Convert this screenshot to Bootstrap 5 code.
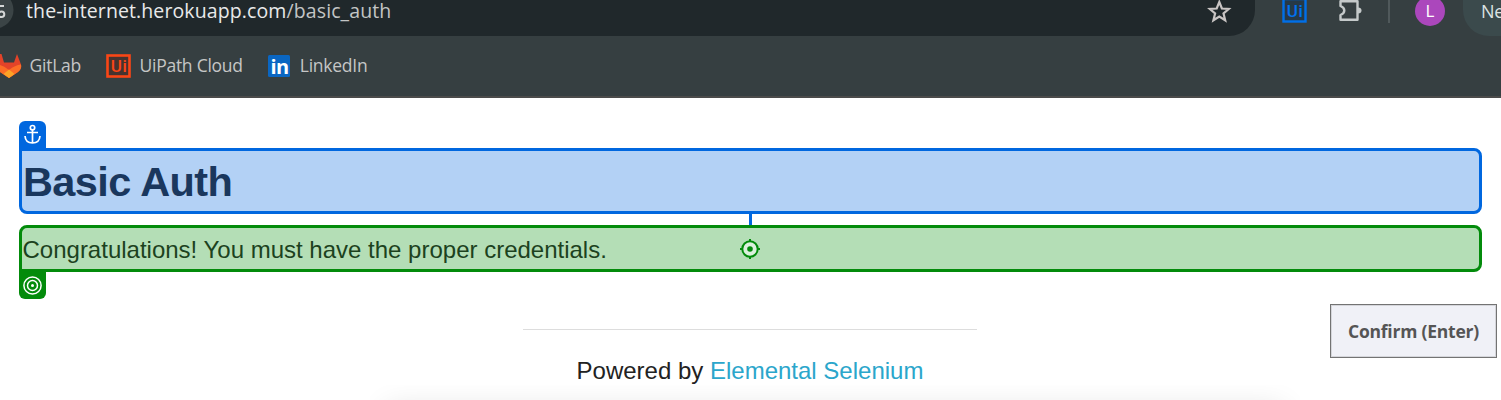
<!DOCTYPE html>
<html lang="en">
<head>
<meta charset="utf-8">
<meta name="viewport" content="width=device-width, initial-scale=1">
<title>The Internet</title>
<link href="https://cdn.jsdelivr.net/npm/bootstrap@5.3.0/dist/css/bootstrap.min.css" rel="stylesheet">
<style>
  body { font-family: "Liberation Sans", sans-serif; background: #fff; }
  svg { display: block; flex: none; }
  .viewport { height: 400px; }
  .chrome-bar { height: 98px; background: #363f41; border-bottom: 2px solid #4b4b4a; font-family: "Open Sans", "Noto Sans", sans-serif; }
  .tool-row { height: 36px; }
  .tool-row > * { flex: none; }
  .omnibox { width: 1255px; height: 36px; background: #20282b; border-bottom-right-radius: 26px; }
  .site-chip { width: 14px; height: 36px; }
  .url { font-size: 19.5px; line-height: 24px; color: #e9eaea; margin: -1px 0 0 12px; letter-spacing: .11px; white-space: nowrap; }
  .url-path { color: #c3c5c5; }
  .star { margin: -1px 23px 0 auto; }
  .ext { margin-left: 27px; }
  .puzzle { margin-left: 31px; }
  .bar-sep { width: 2px; height: 23px; background: #50595b; margin-left: 25px; }
  .avatar { width: 30px; height: 30px; margin: -4px 0 0 25px; background: #ab47bc; color: #fff; font-size: 17px; }
  .update { width: 38px; height: 36px; margin-left: 18px; background: #3b4a4c; border-bottom-left-radius: 26px; color: #dce3e3; font-size: 18px; line-height: 22px; padding-left: 18px; letter-spacing: -.3px; }
  .bookmarks { height: 58px; font-size: 17.5px; color: #c5c6c6; white-space: nowrap; }
  .bookmarks span { line-height: 24px; letter-spacing: -.25px; }
  .bookmarks svg { position: relative; top: 1px; }
  .logo-text { font-family: Roboto, sans-serif; font-weight: 500; font-size: 17px; letter-spacing: .6px; }
  .page-area { padding: 50px 19px 0; }
  .mark-box { border: 3px solid; border-radius: 8px; }
  .anchor-box { height: 66px; border-color: #0067df; background: #b3d1f5; border-top-left-radius: 0; }
  .target-box { height: 47px; margin-top: 11px; border-color: #038b0b; background: #b4deb6; border-bottom-left-radius: 0; }
  .anchor-box h1 { font-size: 41.5px; line-height: 60px; font-weight: 700; color: #1a375d; margin: 1px 0 0 1px; letter-spacing: -.6px; }
  .target-box p { font-size: 24px; line-height: 41px; color: #1c421e; margin: 1px 0 0 .5px; }
  .tab { left: -3px; width: 27px; padding-left: 4px; }
  .tab-top { top: -30px; height: 27px; background: #0067df; border-radius: 6px 6px 0 0; padding-top: 3px; }
  .tab-bottom { top: 44px; height: 27px; background: #038b0b; border-radius: 0 0 6px 6px; padding-top: 4px; }
  .link-line { left: 727px; top: 60px; width: 3px; height: 14px; background: #0067df; }
  .aim { left: 717px; top: 10px; }
  .foot { width: 454px; margin: 57px 0 0 504px; border-top: 1px solid #ddd; padding-top: 23px; font-size: 24px; line-height: 36px; color: #222; white-space: nowrap; }
  .foot a { color: #2ba6cb; text-decoration: none; }
  .confirm { right: 4px; top: 304px; width: 167px; height: 54px; background: #f0f1f7; border: 1px solid #737373; box-shadow: inset 0 0 0 1px #d5d6db; border-radius: 0; color: #555; font: 700 17.5px/24px "Open Sans", "Noto Sans", sans-serif; letter-spacing: -.22px; padding: 0; white-space: nowrap; }
  .panel-shadow { left: 370px; top: 385px; width: 930px; height: 15px; overflow: hidden; }
  .panel-shadow::before { content: ""; display: block; margin: 25px 18px 0; height: 60px; box-shadow: 0 0 30px 2px rgba(0,0,0,.12); }
</style>
</head>
<body>
<div class="viewport position-relative overflow-hidden">
<header class="chrome-bar">
  <div class="tool-row d-flex align-items-start">
    <div class="omnibox d-flex align-items-start">
      <svg class="site-chip" viewBox="0 0 14 36"><circle cx="-5" cy="10" r="18.5" fill="#3b4446"/><g fill="none" stroke="#d5d7d7" stroke-width="2"><path d="M-5 6H4"/><path d="M-4 14H0"/><circle cx="1.5" cy="14.3" r="2.8"/></g></svg>
      <div class="url">the-internet.herokuapp.com<span class="url-path">/basic_auth</span></div>
      <svg class="star" width="26" height="26" viewBox="0 0 26 26"><path d="M13.3 3l2.6 6.5 6.9.5-5.3 4.5 1.7 6.8-5.9-3.7-5.9 3.7 1.7-6.8L3.8 10l6.9-.5z" fill="none" stroke="#c9c5c4" stroke-width="2.2"/></svg>
    </div>
    <svg class="ext" width="25" height="23" viewBox="0 0 25 23"><rect x="1.500" y="-1" width="22" height="22.500" fill="#263947" stroke="#006fe8" stroke-width="2.400"/><text class="logo-text" x="4.800" y="16.500" fill="#0072f0">Ui</text></svg>
    <svg class="puzzle" width="25" height="23" viewBox="0 0 25 23"><path d="M2.500 1.200H19.500V19.800H2.500V15Q6.300 13.500 6.300 10.500T2.500 6z" fill="none" stroke="#c5caca" stroke-width="2.400" stroke-linejoin="round"/><path d="M20 7.500a3.500 3 0 0 1 0 6z" fill="#c5caca"/></svg>
    <div class="bar-sep"></div>
    <div class="avatar rounded-circle d-flex align-items-center justify-content-center">L</div>
    <div class="update text-nowrap">New</div>
  </div>
  <nav class="bookmarks d-flex align-items-center">
    <svg width="22" height="26" viewBox="0 0 22 26"><path d="M-2 1h3.500L4 9.500H14L17 1l4 10.500Q22 16 18 19L9 25 0 19z" fill="#e24329"/><path d="M21 11.500Q15 12 9 17 4 13 0 12v7l9 6 9-6q4-3 3-7.500z" fill="#fc6d26"/><path d="M9 16.500L3.500 21 9 25l5.500-4z" fill="#fca326"/></svg>
    <span style="margin-left:7.500px">GitLab</span>
    <svg width="25" height="24" viewBox="0 0 25 24" style="margin-left:25.500px"><rect x="1.500" y="1.500" width="22" height="21" fill="#47332f" stroke="#fa4616" stroke-width="2.600"/><text class="logo-text" x="4.800" y="18.200" fill="#fa4616">Ui</text></svg>
    <span style="margin-left:8px">UiPath Cloud</span>
    <svg width="22" height="22" viewBox="0 0 22 22" style="margin-left:25px"><rect width="22" height="22" rx="1.500" fill="#0a66c2"/><text x="2.500" y="18.500" font-family="Open Sans, sans-serif" font-weight="700" font-size="20" letter-spacing="-.5" fill="#fff">in</text></svg>
    <span style="margin-left:10px">LinkedIn</span>
  </nav>
</header>
<main class="page-area">
  <section class="mark-box anchor-box position-relative">
    <div class="tab tab-top position-absolute"><svg width="19" height="21" viewBox="0 0 19 21" fill="none" stroke="#fff" stroke-width="1.700"><circle cx="9.500" cy="3.700" r="2.200"/><path d="M9.500 6V19.500M4 8.500H15M2 12Q2.500 19 9.500 19T17 12"/></svg></div>
    <h1>Basic Auth</h1>
    <div class="link-line position-absolute"></div>
  </section>
  <section class="mark-box target-box position-relative">
    <p>Congratulations! You must have the proper credentials.</p>
    <svg class="aim position-absolute" width="22" height="22" viewBox="0 0 22 22"><circle cx="11" cy="11" r="7.700" fill="#dcf0dd" stroke="#038b0b" stroke-width="2"/><circle cx="11" cy="11" r="2.800" fill="#038b0b"/><path d="M11 1v3M11 18v3M1 11h3M18 11h3" stroke="#038b0b" stroke-width="2"/></svg>
    <div class="tab tab-bottom position-absolute"><svg width="19" height="19" viewBox="0 0 19 19" fill="none" stroke="#fff" stroke-width="1.500"><circle cx="9.500" cy="9.500" r="8.600"/><circle cx="9.500" cy="9.500" r="5"/><circle cx="9.500" cy="9.500" r="1.500" fill="#fff" stroke="none"/></svg></div>
  </section>
  <footer class="foot text-center">Powered by <a href="#">Elemental Selenium</a></footer>
</main>
<button class="confirm btn position-absolute">Confirm (Enter)</button>
<div class="panel-shadow position-absolute"></div>
</div>
<script src="https://cdn.jsdelivr.net/npm/bootstrap@5.3.0/dist/js/bootstrap.bundle.min.js"></script>
</body>
</html>
